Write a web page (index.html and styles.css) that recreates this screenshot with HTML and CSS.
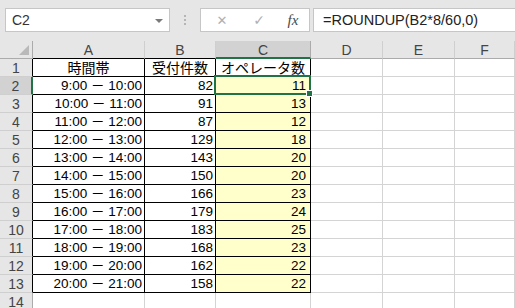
FILE: index.html
```html
<!DOCTYPE html>
<html lang="ja">
<head>
<meta charset="utf-8">
<title>オペレータ数</title>
<link rel="stylesheet" href="styles.css">
</head>
<body>
<div class="bar">
	<div class="namebox">C2<span class="drop"></span></div>
	<div class="grip"><i></i><i></i><i></i></div>
	<div class="btns">
		<span class="btn x">✕</span>
		<span class="btn ok">✓</span>
		<span class="btn fx">fx</span>
	</div>
	<div class="formula">=ROUNDUP(B2*8/60,0)</div>
</div>
<div class="sheet">
	<div class="hd corner"><span class="tri"></span></div>
	<div class="hd col blk">A</div>
	<div class="hd col blk">B</div>
	<div class="hd col sel">C</div>
	<div class="hd col">D</div>
	<div class="hd col">E</div>
	<div class="hd col">F</div>

	<div class="hd row blk">1</div>
	<div class="c b ctr jp">時間帯</div>
	<div class="c b ctr jp">受付件数</div>
	<div class="c b ctr jp">オペレータ数</div>
	<div class="c"></div><div class="c"></div><div class="c"></div>

	<div class="hd row rsel">2</div>
	<div class="c b">9:00 － 10:00</div>
	<div class="c b">82</div>
	<div class="c b y active">11<span class="selbox"><span class="handle"></span></span></div>
	<div class="c"></div><div class="c"></div><div class="c"></div>

	<div class="hd row blk">3</div>
	<div class="c b">10:00 － 11:00</div>
	<div class="c b">91</div>
	<div class="c b y">13</div>
	<div class="c"></div><div class="c"></div><div class="c"></div>

	<div class="hd row blk">4</div>
	<div class="c b">11:00 － 12:00</div>
	<div class="c b">87</div>
	<div class="c b y">12</div>
	<div class="c"></div><div class="c"></div><div class="c"></div>

	<div class="hd row blk">5</div>
	<div class="c b">12:00 － 13:00</div>
	<div class="c b">129</div>
	<div class="c b y">18</div>
	<div class="c"></div><div class="c"></div><div class="c"></div>

	<div class="hd row blk">6</div>
	<div class="c b">13:00 － 14:00</div>
	<div class="c b">143</div>
	<div class="c b y">20</div>
	<div class="c"></div><div class="c"></div><div class="c"></div>

	<div class="hd row blk">7</div>
	<div class="c b">14:00 － 15:00</div>
	<div class="c b">150</div>
	<div class="c b y">20</div>
	<div class="c"></div><div class="c"></div><div class="c"></div>

	<div class="hd row blk">8</div>
	<div class="c b">15:00 － 16:00</div>
	<div class="c b">166</div>
	<div class="c b y">23</div>
	<div class="c"></div><div class="c"></div><div class="c"></div>

	<div class="hd row blk">9</div>
	<div class="c b">16:00 － 17:00</div>
	<div class="c b">179</div>
	<div class="c b y">24</div>
	<div class="c"></div><div class="c"></div><div class="c"></div>

	<div class="hd row blk">10</div>
	<div class="c b">17:00 － 18:00</div>
	<div class="c b">183</div>
	<div class="c b y">25</div>
	<div class="c"></div><div class="c"></div><div class="c"></div>

	<div class="hd row blk">11</div>
	<div class="c b">18:00 － 19:00</div>
	<div class="c b">168</div>
	<div class="c b y">23</div>
	<div class="c"></div><div class="c"></div><div class="c"></div>

	<div class="hd row blk">12</div>
	<div class="c b">19:00 － 20:00</div>
	<div class="c b">162</div>
	<div class="c b y">22</div>
	<div class="c"></div><div class="c"></div><div class="c"></div>

	<div class="hd row blk">13</div>
	<div class="c b">20:00 － 21:00</div>
	<div class="c b">158</div>
	<div class="c b y">22</div>
	<div class="c"></div><div class="c"></div><div class="c"></div>

	<div class="hd row">14</div>
	<div class="c"></div><div class="c"></div><div class="c"></div>
	<div class="c"></div><div class="c"></div><div class="c"></div>
</div>
</body>
</html>
```

FILE: styles.css
```css
html,body{margin:0; padding:0; background:#fff; overflow:hidden;}
body{font-family:"Liberation Sans","Noto Sans CJK JP",sans-serif; font-size:13.5px; color:#000;}

/* formula bar */
.bar{height:41px; background:#e6e6e6; display:flex; align-items:flex-start; padding-top:8px; box-sizing:border-box;}
.namebox{position:relative; margin-left:5px; width:165px; height:24px; box-sizing:border-box; background:#fff; border:1px solid #c6c6c6; padding-left:6px; line-height:22px; font-size:14px; color:#333;}
.drop{position:absolute; right:6px; top:10px; border-left:4px solid transparent; border-right:4px solid transparent; border-top:4px solid #7a7a7a;}
.grip{width:30px; height:24px; display:flex; flex-direction:column; align-items:center; justify-content:center; gap:2px;}
.grip i{display:block; width:2px; height:2px; background:#b5b5b5;}
.btns{width:110px; height:24px; box-sizing:border-box; background:#fff; border:1px solid #c6c6c6; display:flex; align-items:center;}
.btn{display:block; text-align:center; color:#b0b0b0; font-family:"DejaVu Sans",sans-serif;}
.x{width:38px; font-size:13px; padding-left:2px;}
.ok{width:36px; font-size:14px;}
.fx{width:32px; font-family:"Liberation Serif",serif; font-style:italic; font-size:15px; color:#4a4a4a;}
.formula{flex:1; margin-left:3px; height:24px; box-sizing:border-box; background:#fff; border:1px solid #c6c6c6; border-right:0; padding-left:9px; line-height:22px; font-size:14.5px; color:#222;}

/* grid */
.sheet{display:grid; grid-template-columns:33px 112px 71px 95px 72px 72px 1fr; grid-auto-rows:18px;}
.c{box-sizing:border-box; border-right:1px solid #d4d4d4; border-bottom:1px solid #d4d4d4; text-align:right; padding-right:2px; line-height:18px; white-space:nowrap;}
.c.b{border-right-color:#000; border-bottom-color:#000;}
.c.ctr{text-align:center; padding-right:0;}
.c.jp{font-family:"Noto Sans CJK JP",sans-serif; font-size:14px; line-height:17px;}
.c.y{background:#ffffcc; padding-right:4px;}
.active{position:relative;}
.selbox{position:absolute; left:-2px; top:-2px; width:calc(100% + 3px); height:calc(100% + 3px); box-sizing:border-box; border:2px solid #217346;}
.handle{position:absolute; right:-4px; bottom:-4px; width:5px; height:5px; background:#217346; border:1px solid #fff;}

.hd{box-sizing:border-box; background:#e6e6e6; color:#444; text-align:center; font-size:14px;}
.col{border-right:1px solid #cfcfcf; border-bottom:1px solid #ababab; line-height:18px;}
.col.blk{border-bottom-color:#000;}
.col.sel{background:#d2d2d2; border-bottom:2px solid #217346; border-right-color:#ababab;}
.row{border-right:1px solid #ababab; border-bottom:1px solid #cfcfcf; line-height:18px;}
.row.blk{border-right-color:#000;}
.row.rsel{background:#d2d2d2; border-right:2px solid #217346;}
.corner{position:relative; border-right:1px solid #ababab; border-bottom:1px solid #ababab;}
.tri{position:absolute; right:3px; bottom:3px; border-left:10px solid transparent; border-bottom:10px solid #b9b9b9;}
```
